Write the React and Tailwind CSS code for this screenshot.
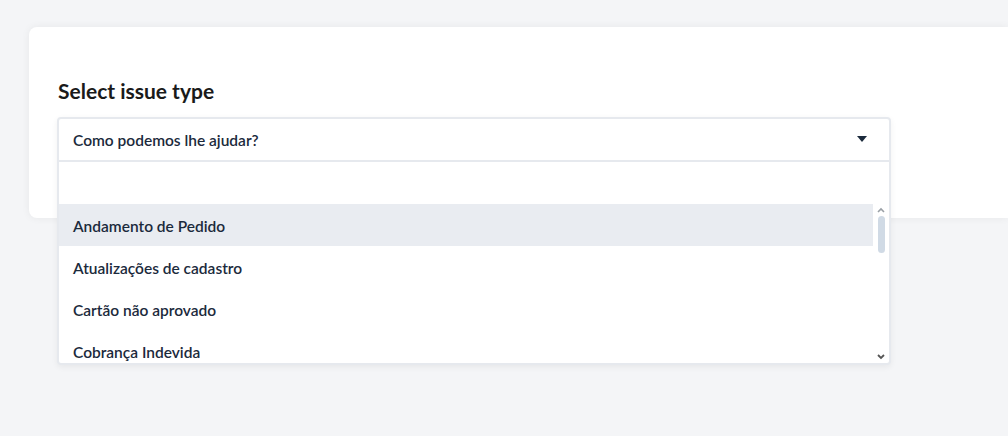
import React from 'react'

const options = [
  'Andamento de Pedido',
  'Atualizações de cadastro',
  'Cartão não aprovado',
  'Cobrança Indevida',
]

const App = () => {
  return (
    <div className="min-h-screen w-full overflow-hidden bg-[#f4f5f7] pt-[27px] pl-[29px] font-['Lato',sans-serif]">
      <div className="relative h-[191px] rounded-l-[8px] bg-white pt-[52px] pl-[29px] shadow-[0_0_8px_rgba(0,0,0,0.06)]">
        <h2 className="text-[21px] font-bold leading-[24px] text-[#1a1a1a]">Select issue type</h2>

        <div className="absolute left-[28px] top-[90px] w-[834px] rounded-[4px] border-2 border-[#e6e9ee] bg-white shadow-[0_2px_6px_rgba(0,0,0,0.06)]">
          {/* Select header */}
          <div className="flex h-[43px] items-center justify-between border-b-2 border-[#e6e9ee] pt-[2px] pl-[14px] pr-[22px]">
            <span className="text-[15.5px] font-semibold text-[#1b2a3c]">Como podemos lhe ajudar?</span>
            <svg width="10" height="6" viewBox="0 0 10 6" className="mt-[-3px]">
              <path d="M0 0 L10 0 L5 6 Z" fill="#1b2a3c" />
            </svg>
          </div>

          {/* Search */}
          <div className="h-[42px]" />

          {/* List */}
          <div className="flex h-[159px]">
            <div className="flex-1 overflow-hidden">
              {options.map((opt, i) => (
                <div
                  key={opt}
                  className={`flex h-[42px] shrink-0 items-center pt-[3px] pl-[14px] text-[15.5px] font-semibold text-[#1b2a3c] ${i === 0 ? 'bg-[#e9ecf1]' : ''}`}
                >
                  {opt}
                </div>
              ))}
            </div>
            {/* scrollbar */}
            <div className="flex w-[16px] flex-col items-center pt-[3px] pb-[3px]">
              <svg width="8" height="6" viewBox="0 0 8 6">
                <path d="M1 5 L4 2 L7 5" fill="none" stroke="#9aa0a6" strokeWidth="1.6" />
              </svg>
              <div className="mt-[3px] h-[37px] w-[7px] rounded-full bg-[#d0dae5]" />
              <div className="flex-1" />
              <svg width="8" height="6" viewBox="0 0 8 6">
                <path d="M1 1 L4 4 L7 1" fill="none" stroke="#555" strokeWidth="1.8" />
              </svg>
            </div>
          </div>
        </div>
      </div>
    </div>
  )
}

export default App
